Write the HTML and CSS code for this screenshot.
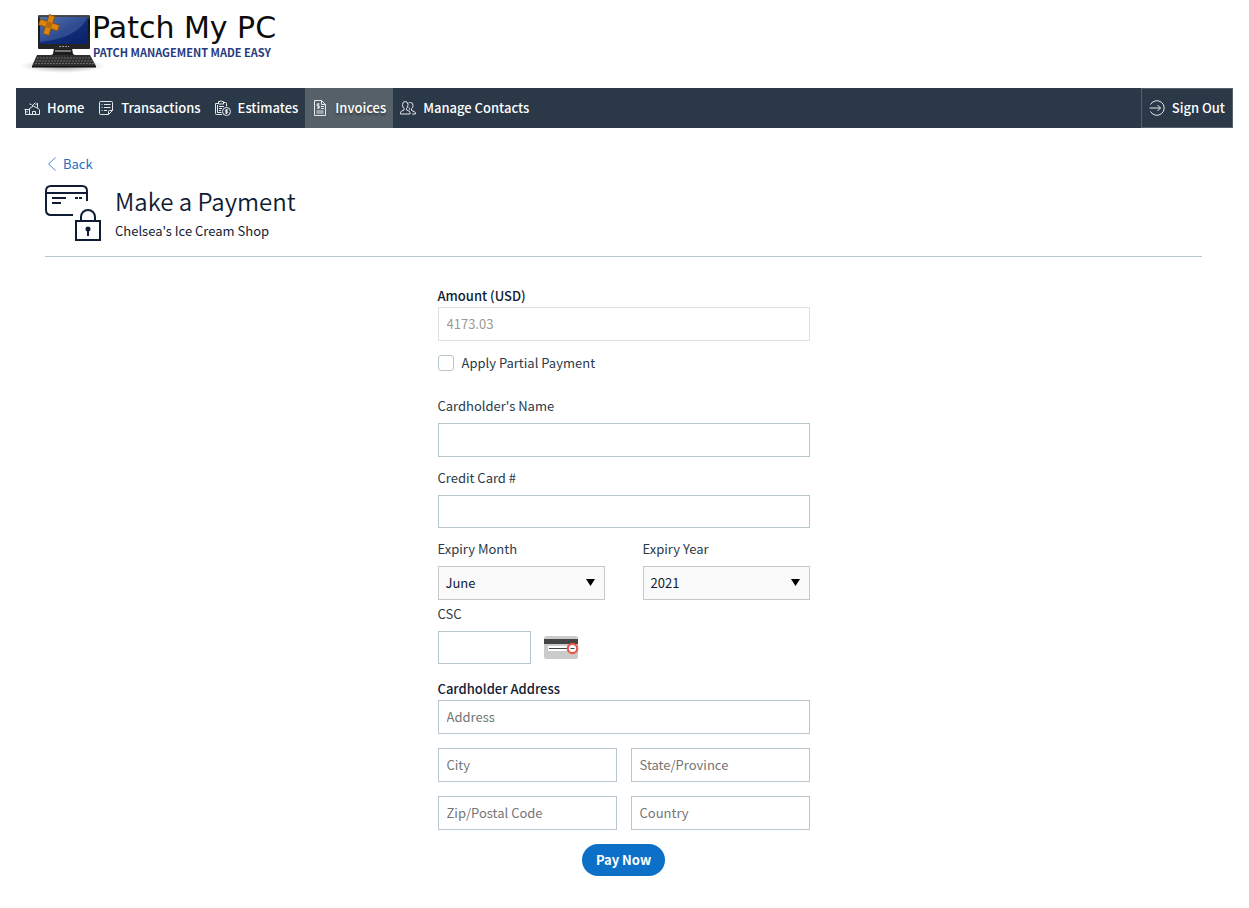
FILE: index.html
```html
<!DOCTYPE html>
<html lang="en">
<head>
<meta charset="utf-8">
<meta name="viewport" content="width=device-width, initial-scale=1">
<title>Make a Payment</title>
<link rel="stylesheet" href="styles.css">
</head>
<body class="page">
<header class="brand">
  <svg class="brand-icon" width="86" height="64" viewBox="0 0 86 64" aria-hidden="true">
    <defs>
      <linearGradient id="screen" x1="0" y1="0" x2="1" y2="1">
        <stop offset="0" stop-color="#3b64a8"/><stop offset="0.5" stop-color="#14307a"/><stop offset="1" stop-color="#08206a"/>
      </linearGradient>
      <linearGradient id="frame" x1="0" y1="0" x2="0" y2="1">
        <stop offset="0" stop-color="#555"/><stop offset="0.15" stop-color="#151515"/><stop offset="1" stop-color="#262626"/>
      </linearGradient>
      <radialGradient id="shade"><stop offset="0" stop-color="#555" stop-opacity="0.7"/><stop offset="1" stop-color="#999" stop-opacity="0"/></radialGradient>
    </defs>
    <ellipse cx="43" cy="57" rx="43" ry="7" fill="url(#shade)"/>
    <path d="M34 39h18l1 6 7 4v2H27v-2l6-4z" fill="#1c1c1c"/>
    <path d="M35 41h16v2H35z" fill="#777"/>
    <rect x="18" y="6" width="52" height="34" rx="1" fill="url(#frame)"/>
    <rect x="20" y="8" width="48" height="27" fill="url(#screen)"/>
    <path d="M20 8h48Q58 29 20 33z" fill="#7d9cd0" opacity="0.28"/>
    <path d="M39 37.500h10" stroke="#999" stroke-dasharray="2 1"/>
    <path d="M17 46h53l6 11H12z" fill="#303030"/>
    <path d="M17 49h54M16 52h57M15 54.500h59" stroke="#6a6a6a" stroke-dasharray="2 1"/>
    <path d="M12 57h64v1.500H12z" fill="#111"/>
    <g transform="rotate(18 29 16)">
      <path d="M26 6h6v7h7v6h-7v7h-6v-7h-7v-6h7z" fill="#d98512" stroke="#8a4c06" stroke-width="0.800"/>
      <path d="M26 13h6v6h-6z" fill="#b8690c"/>
    </g>
  </svg>
  <div class="brand-text">
    <span class="brand-name">Patch My PC</span>
    <span class="brand-tagline">PATCH MANAGEMENT MADE EASY</span>
  </div>
</header>

<nav class="nav" aria-label="Main">
  <a class="nav-link" href="#home">
    <svg class="icon" viewBox="0 0 16 16" aria-hidden="true"><path d="M1.500 9.500v5h14v-5M.5 9.500h5M5.500 14.500v-6l4-2.500 5.500 3M3 11v1.500M8.500 14.500v-3h3v3M13.500 7.500V3l-2 2M5.500 4l2 .5M8 6l3.500-3.500"/></svg>
    Home</a>
  <a class="nav-link" href="#transactions">
    <svg class="icon" viewBox="0 0 16 16" aria-hidden="true"><path d="M2.500 1.500h11a1 1 0 0 1 1 1v8l-4 4h-8a1 1 0 0 1-1-1v-11a1 1 0 0 1 1-1zM14.500 10.500h-3a1 1 0 0 0-1 1v3M3.500 4.500h1M6 4.500h6.500M3.500 7.500h1M6 7.500h6.500M3.500 10.500h1M6 10.500h3"/></svg>
    Transactions</a>
  <a class="nav-link" href="#estimates">
    <svg class="icon" viewBox="0 0 16 16" aria-hidden="true"><path d="M7 14.500H1.500a1 1 0 0 1-1-1v-10h3M8.500 2.500h2a1 1 0 0 1 1 1v3M3.500 1.500h1.500a1.200 1.200 0 0 1 2 0h1.500v2.500h-5zM2.500 5v7.500h4M4 6.500h5M4 8.500h3M4 10.500h2"/><circle cx="11.500" cy="11.500" r="4"/><path d="M13 10h-2a.7.700 0 0 0 0 1.500h1a.7.700 0 0 1 0 1.500h-2M11.500 9v5"/></svg>
    Estimates</a>
  <a class="nav-link nav-link--active" href="#invoices" aria-current="page">
    <svg class="icon" viewBox="0 0 16 16" aria-hidden="true"><path d="M2.500.5h7l4 4v11h-11zM9.500.5v4h4M7.500 4H5.800a1 1 0 0 0 0 2h1a1 1 0 0 1 0 2H5M6.300 3v6M9 6.500h3M9 8.500h3M4.500 11h7M4.500 13h7"/></svg>
    Invoices</a>
  <a class="nav-link" href="#contacts">
    <svg class="icon" viewBox="0 0 16 16" aria-hidden="true"><path d="M.5 14v-1.500q0-1.300 3.500-2.500V8.500Q2.500 7.500 2.500 4.500 2.700 1.500 5.200 1.500T8 4.500Q8 7.500 6.500 8.500V10q3.500 1 3.500 2.500V14zM8.500 3Q9.200 2.500 10.500 2.500q2.500 0 2.500 3 0 2.500-1.500 3.300V10.500q4 1 4 2.500v1H12M9 7.500l.5 1v1.300"/></svg>
    Manage Contacts</a>
  <a class="nav-link nav-link--end" href="#signout">
    <svg class="icon" viewBox="0 0 16 16" aria-hidden="true"><path d="M1.500 4.500a7.300 7.300 0 1 1 0 7M.5 8h11M8.500 5l3 3-3 3"/></svg>
    Sign Out</a>
</nav>

<main class="content">
  <a class="back" href="#back">
    <svg width="10" height="14" viewBox="0 0 10 14" aria-hidden="true"><path d="M8.500.5L1.500 7l7 6.500" fill="none" stroke="currentColor" stroke-width="0.800"/></svg>
    Back</a>
  <div class="heading">
    <svg width="57" height="57" viewBox="0 0 57 57" fill="none" stroke="#101c33" stroke-width="2" aria-hidden="true">
      <path d="M28 30H6q-5 0-5-5V6q0-5 5-5h31q5 0 5 5v10M1 8h41M7 13h14M7 18h9M30 13h3M34 13h3"/>
      <path d="M31 36h24v19H31zM36 36v-4a7 7 0 0 1 14 0v4" />
      <circle cx="43" cy="44" r="1.500" fill="#101c33"/><path d="M43 44v7"/>
    </svg>
    <div>
      <h1 class="title">Make a Payment</h1>
      <p class="subtitle">Chelsea's Ice Cream Shop</p>
    </div>
  </div>

  <form class="form">
    <label class="label label--strong" for="amount">Amount (USD)</label>
    <input class="input" id="amount" type="text" value="4173.03" disabled>
    <div class="check-row">
      <input class="check" id="partial" type="checkbox">
      <label for="partial">Apply Partial Payment</label>
    </div>

    <div class="field">
      <label class="label" for="name">Cardholder's Name</label>
      <input class="input" id="name" type="text">
    </div>
    <div class="field">
      <label class="label" for="card">Credit Card #</label>
      <input class="input input--card" id="card" type="text">
    </div>
    <div class="expiry">
      <div class="field">
        <label class="label" for="month">Expiry Month</label>
        <div class="select-wrap">
          <select class="select" id="month"><option>June</option></select>
          <svg class="arrow" width="9" height="7" viewBox="0 0 9 7" aria-hidden="true"><path d="M0 0h9L4.500 7z"/></svg>
        </div>
      </div>
      <div class="field">
        <label class="label" for="year">Expiry Year</label>
        <div class="select-wrap">
          <select class="select" id="year"><option>2021</option></select>
          <svg class="arrow" width="9" height="7" viewBox="0 0 9 7" aria-hidden="true"><path d="M0 0h9L4.500 7z"/></svg>
        </div>
      </div>
    </div>
    <div class="field field--csc">
      <label class="label" for="csc">CSC</label>
      <div class="csc-row">
        <input class="input input--card input--csc" id="csc" type="text">
        <svg width="36" height="24" viewBox="0 0 36 24" aria-hidden="true">
          <rect x="1" y="0" width="34" height="23" rx="2.500" fill="#cbcbcb"/>
          <path d="M1 3h34v5H1z" fill="#444"/>
          <path d="M5 10h21v5H5z" fill="#fff"/>
          <path d="M6 12.500h19" stroke="#444"/>
          <circle cx="29.500" cy="12.500" r="4.700" fill="#fff" stroke="#e8574b" stroke-width="2.200"/>
          <path d="M27.500 12.500h4" stroke="#444"/>
        </svg>
      </div>
    </div>

    <fieldset class="address">
      <legend class="label label--strong">Cardholder Address</legend>
      <div class="address-grid">
        <input class="input address-wide" type="text" placeholder="Address" aria-label="Address">
        <input class="input" type="text" placeholder="City" aria-label="City">
        <input class="input" type="text" placeholder="State/Province" aria-label="State/Province">
        <input class="input" type="text" placeholder="Zip/Postal Code" aria-label="Zip/Postal Code">
        <input class="input" type="text" placeholder="Country" aria-label="Country">
      </div>
    </fieldset>
    <button class="pay" type="button">Pay Now</button>
  </form>
</main>
</body>
</html>
```

FILE: styles.css
```css
* { box-sizing: border-box; }

.page {
  margin: 0;
  padding: 8px 16px 32px;
  background: #fff;
  color: #2b3a4a;
  font-family: "Noto Sans CJK SC", "Open Sans", sans-serif;
  font-size: 13px;
  line-height: 20px;
}

.brand {
  display: flex;
  height: 80px;
  padding-left: 4px;
}
.brand-icon { margin-top: 1px; }
.brand-text {
  display: flex;
  flex-direction: column;
  margin-left: -14px;
  padding-top: 4px;
}
.brand-name {
  font-family: "DejaVu Sans", sans-serif;
  font-size: 30px;
  line-height: 32px;
  color: #0c0c0c;
  white-space: nowrap;
}
.brand-tagline {
  padding-left: 1px;
  font-size: 11px;
  font-weight: 700;
  line-height: 16px;
  color: #263a80;
  white-space: nowrap;
}

.nav {
  display: flex;
  flex-wrap: wrap;
  padding-left: 1px;
  background: #2a3848;
}
.nav-link {
  display: flex;
  align-items: center;
  gap: 7px;
  height: 40px;
  padding: 0 7px;
  color: #fff;
  font-weight: 500;
  text-decoration: none;
}
.nav-link--active {
  background: #566068;
  text-shadow: 0 2px 2px rgba(0, 0, 0, 0.4);
}
.nav-link--end {
  margin-left: auto;
  border: 1px solid #566068;
}
.icon {
  width: 16px;
  height: 16px;
  fill: none;
  stroke: #e6e9ec;
  stroke-width: 1;
}

.content { padding: 26px 31px 0 29px; }

.back {
  display: flex;
  align-items: center;
  gap: 6px;
  width: fit-content;
  padding-left: 2px;
  color: #1d6fc4;
  text-decoration: none;
}
.heading {
  display: flex;
  gap: 13px;
  padding: 11px 0 14px;
  border-bottom: 1px solid #bac7cf;
}
.title {
  margin: 0;
  color: #101c33;
  font-size: 24px;
  font-weight: 350;
  line-height: 32px;
}
.subtitle {
  margin: 4px 0 0;
  color: #101c33;
}

.form {
  display: flex;
  flex-direction: column;
  max-width: 372px;
  margin: 28px auto 0;
}
.label {
  display: block;
  margin-bottom: 6px;
  line-height: 22px;
}
.label--strong {
  margin-bottom: 0;
  padding: 0;
  color: #101c33;
  font-weight: 500;
}
.input,
.select {
  width: 100%;
  min-width: 0;
  height: 34px;
  margin: 0;
  padding: 0 8px 2px;
  border: 1px solid #b8c6ce;
  border-radius: 0;
  background: #fff;
  color: #101c33;
  font: inherit;
}
.input:disabled {
  border-color: #dae2e5;
  color: #999;
}
.input::placeholder { color: #757575; opacity: 1; }
.input--card { height: 33px; }
.input--csc { width: 93px; }

.check-row {
  display: flex;
  align-items: center;
  gap: 8px;
  margin: 12px 0;
}
.check {
  appearance: none;
  width: 16px;
  height: 16px;
  margin: 0;
  border: 1px solid #b8c6ce;
  border-radius: 3px;
}
.check:checked { background: #0d70c8; }
.field { padding-top: 10px; }
.field--csc { padding-top: 3px; }
.expiry {
  display: grid;
  grid-template-columns: 1fr 1fr;
  gap: 38px;
}
.select-wrap { position: relative; }
.select {
  display: block;
  appearance: none;
  padding: 0 7px;
  border-color: #c8c8c8;
  background: #fafafa;
}
.arrow {
  position: absolute;
  top: 13px;
  right: 10px;
  pointer-events: none;
}
.csc-row {
  display: flex;
  align-items: center;
  gap: 12px;
}
.address {
  min-width: 0;
  margin: 14px 0;
  padding: 0;
  border: 0;
}
.address-grid {
  display: grid;
  grid-template-columns: 1fr 1fr;
  gap: 14px;
}
.address-wide { grid-column: 1 / -1; }
.pay {
  align-self: center;
  height: 32px;
  padding: 0 14px;
  border: 0;
  border-radius: 16px;
  background: #0d70c8;
  color: #fff;
  font: inherit;
  font-weight: 700;
}
```
